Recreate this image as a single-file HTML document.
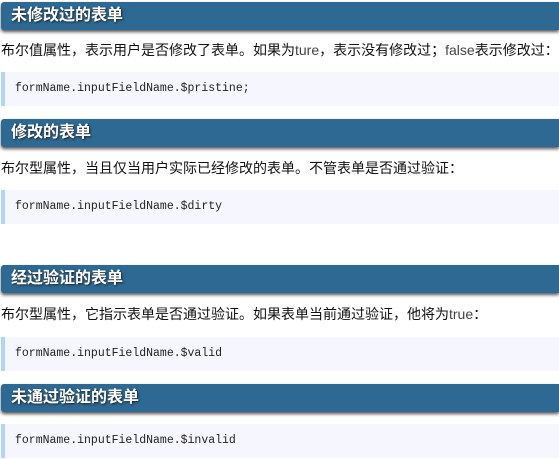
<!DOCTYPE html>
<html><head><meta charset="utf-8"><style>
body{margin:0;width:559px;height:459px;overflow:hidden;background:#fff;font-family:"Liberation Sans","Noto Sans CJK SC",sans-serif;}
.h{position:absolute;left:1px;width:558px;height:28px;background:#2d6993;border-radius:3px 0 0 3px;box-shadow:0 2px 3px #555;color:#fff;font-weight:bold;font-size:16px;line-height:28px;padding-left:10px;box-sizing:border-box;text-shadow:1px 1px 2px #222;}
.t{position:absolute;left:1px;font-size:14px;color:#111;line-height:18px;white-space:nowrap;}
.t span{color:#444;font-family:"Liberation Sans",sans-serif;}
.c{position:absolute;left:1px;width:558px;height:34px;background:#f6f6ff;border-left:4px solid #b3d4f5;box-sizing:border-box;font-family:"Liberation Mono",monospace;font-size:11.5px;line-height:34px;padding-left:10px;color:#222;}
</style></head><body>
<div class="h" style="top:2px">未修改过的表单</div>
<div class="t" style="top:41px">布尔值属性，表示用户是否修改了表单。如果为<span>ture</span>，表示没有修改过；<span>false</span>表示修改过：</div>
<div class="c" style="top:72px">formName.inputFieldName.$pristine;</div>
<div class="h" style="top:119px">修改的表单</div>
<div class="t" style="top:159px">布尔型属性，当且仅当用户实际已经修改的表单。不管表单是否通过验证：</div>
<div class="c" style="top:190px">formName.inputFieldName.$dirty</div>
<div class="h" style="top:265px">经过验证的表单</div>
<div class="t" style="top:305px">布尔型属性，它指示表单是否通过验证。如果表单当前通过验证，他将为<span>true</span>：</div>
<div class="c" style="top:337px">formName.inputFieldName.$valid</div>
<div class="h" style="top:384px">未通过验证的表单</div>
<div class="c" style="top:424px">formName.inputFieldName.$invalid</div>
</body></html>
